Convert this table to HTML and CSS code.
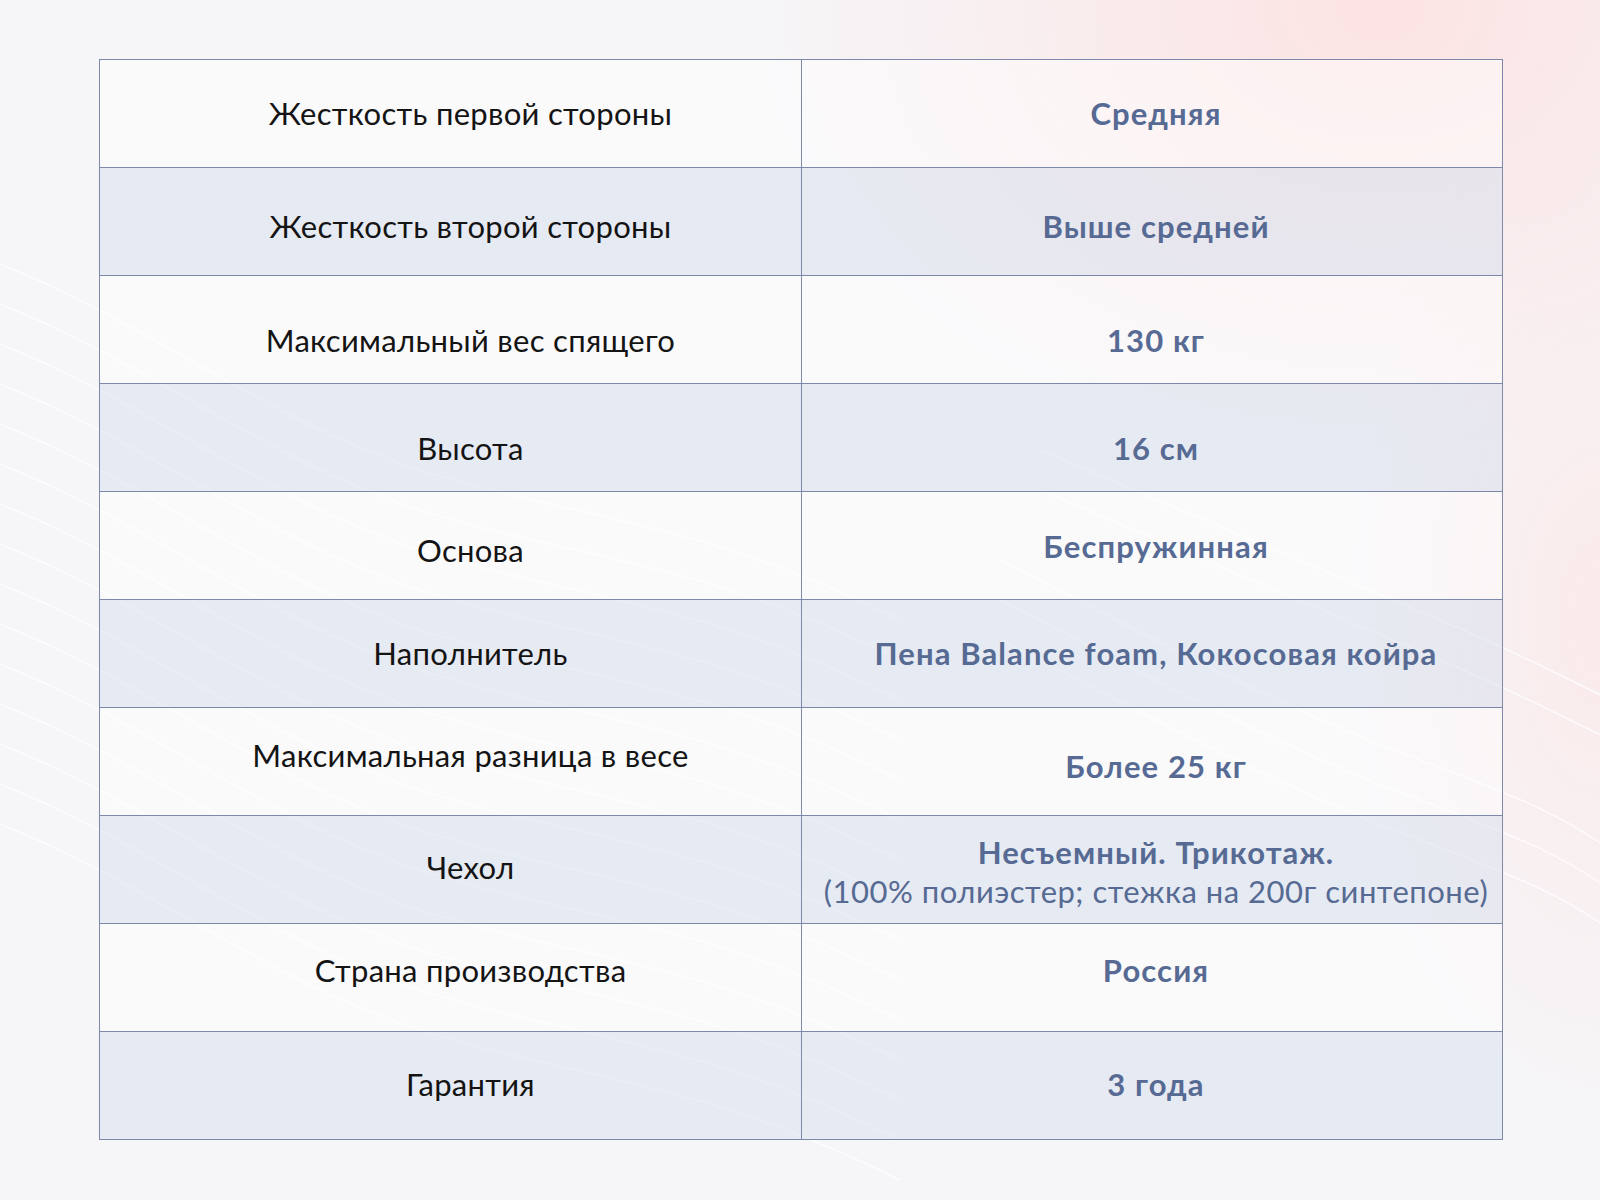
FILE: index.html
```html
<!DOCTYPE html>
<html lang="ru">
<head>
<meta charset="utf-8">
<title>Характеристики</title>
<link rel="stylesheet" href="styles.css">
</head>
<body>
<svg class="waves" width="1600" height="1200" viewBox="0 0 1600 1200" aria-hidden="true">
  <g fill="none" stroke="#ffffff" stroke-width="1.6">
    <path d="M-40 250 C 120 300, 260 420, 420 470 S 700 520, 900 620"/>
    <path d="M-40 290 C 120 340, 260 460, 420 510 S 700 560, 900 660"/>
    <path d="M-40 330 C 120 380, 260 500, 420 550 S 700 600, 900 700"/>
    <path d="M-40 370 C 120 420, 260 540, 420 590 S 700 640, 900 740"/>
    <path d="M-40 410 C 120 460, 260 580, 420 630 S 700 680, 900 780"/>
    <path d="M-40 450 C 120 500, 260 620, 420 670 S 700 720, 900 820"/>
    <path d="M-40 490 C 120 540, 260 660, 420 710 S 700 760, 900 860"/>
    <path d="M-40 530 C 120 580, 260 700, 420 750 S 700 800, 900 900"/>
    <path d="M-40 570 C 120 620, 260 740, 420 790 S 700 840, 900 940"/>
    <path d="M-40 610 C 120 660, 260 780, 420 830 S 700 880, 900 980"/>
    <path d="M-40 650 C 120 700, 260 820, 420 870 S 700 920, 900 1020"/>
    <path d="M-40 690 C 120 740, 260 860, 420 910 S 700 960, 900 1060"/>
    <path d="M-40 730 C 120 780, 260 900, 420 950 S 700 1000, 900 1100"/>
    <path d="M-40 770 C 120 820, 260 940, 420 990 S 700 1040, 900 1140"/>
    <path d="M-40 810 C 120 860, 260 980, 420 1030 S 700 1080, 900 1180"/>
    <path d="M1000 560 C 1120 620, 1260 700, 1420 760 S 1560 820, 1660 880"/>
    <path d="M1000 600 C 1120 660, 1260 740, 1420 800 S 1560 860, 1660 920"/>
    <path d="M1000 640 C 1120 700, 1260 780, 1420 840 S 1560 900, 1660 960"/>
    <path d="M1040 450 C 1160 500, 1300 560, 1440 620 S 1560 680, 1660 720"/>
    <path d="M1040 490 C 1160 540, 1300 600, 1440 660 S 1560 720, 1660 760"/>
  </g>
</svg>
<main class="page">
  <div class="specs">
    <div class="row">
      <div class="cell name">Жесткость первой стороны</div>
      <div class="cell value">Средняя</div>
    </div>
    <div class="row alt">
      <div class="cell name dn-5">Жесткость второй стороны</div>
      <div class="cell value dn-5">Выше средней</div>
    </div>
    <div class="row">
      <div class="cell name dn-11">Максимальный вес спящего</div>
      <div class="cell value dn-11">130 кг</div>
    </div>
    <div class="row alt">
      <div class="cell name dn-11">Высота</div>
      <div class="cell value dn-11">16 см</div>
    </div>
    <div class="row">
      <div class="cell name dn-5">Основа</div>
      <div class="cell value dn-1">Беспружинная</div>
    </div>
    <div class="row alt">
      <div class="cell name">Наполнитель</div>
      <div class="cell value">Пена Balance foam, Кокосовая койра</div>
    </div>
    <div class="row">
      <div class="cell name up-6">Максимальная разница в весе</div>
      <div class="cell value dn-5">Более 25 кг</div>
    </div>
    <div class="row alt">
      <div class="cell name up-2">Чехол</div>
      <div class="cell value multi dn-2">
        <span class="strong">Несъемный. Трикотаж.</span>
        <span class="note">(100% полиэстер; стежка на 200г синтепоне)</span>
      </div>
    </div>
    <div class="row">
      <div class="cell name up-7">Страна производства</div>
      <div class="cell value up-7">Россия</div>
    </div>
    <div class="row alt">
      <div class="cell name up-1">Гарантия</div>
      <div class="cell value up-1">3 года</div>
    </div>
  </div>
</main>
</body>
</html>
```

FILE: styles.css
```css
html, body {
  margin: 0;
  padding: 0;
}

body {
  width: 1600px;
  height: 1200px;
  overflow: hidden;
  position: relative;
  font-family: "Lato", "Open Sans", "Noto Sans", sans-serif;
  background-color: #f6f6f8;
  background-image:
    radial-gradient(ellipse 640px 460px at 1380px 10px, rgba(253, 226, 226, 0.95) 0%, rgba(253, 226, 226, 0.5) 45%, rgba(253, 226, 226, 0) 100%),
    radial-gradient(ellipse 260px 520px at 1600px 620px, rgba(252, 230, 230, 0.75) 0%, rgba(252, 230, 230, 0) 100%);
}

.waves {
  position: absolute;
  left: 0;
  top: 0;
  opacity: 0.75;
  z-index: 0;
}

.page {
  position: relative;
  z-index: 1;
  padding: 59px 0 0 99px;
}

.specs {
  width: 1404px;
  box-sizing: border-box;
  border-top: 1px solid #7d89ab;
  border-left: 1px solid #7d89ab;
  display: flex;
  flex-direction: column;
}

.row {
  display: grid;
  grid-template-columns: 702px 701px;
  height: 108px;
  background: rgba(255, 255, 255, 0.45);
}

.row.alt {
  background: rgba(214, 221, 236, 0.48);
}

.cell {
  box-sizing: border-box;
  border-right: 1px solid #7d89ab;
  border-bottom: 1px solid #7d89ab;
  display: flex;
  flex-direction: column;
  align-items: center;
  justify-content: center;
  text-align: center;
  font-size: 31px;
  line-height: 39px;
}

.name {
  color: #141414;
  font-weight: 400;
  letter-spacing: 0.3px;
  padding-left: 40px;
}

.value {
  color: #566a93;
  font-weight: 700;
  letter-spacing: 1.1px;
  padding-left: 8px;
}

.value .note {
  font-weight: 400;
  letter-spacing: 0.5px;
}

.dn-1 { padding-top: 2px; }
.dn-2 { padding-top: 4px; }
.dn-5 { padding-top: 10px; }
.dn-11 { padding-top: 22px; }
.up-1 { padding-bottom: 2px; }
.up-2 { padding-bottom: 4px; }
.up-6 { padding-bottom: 12px; }
.up-7 { padding-bottom: 14px; }
```
